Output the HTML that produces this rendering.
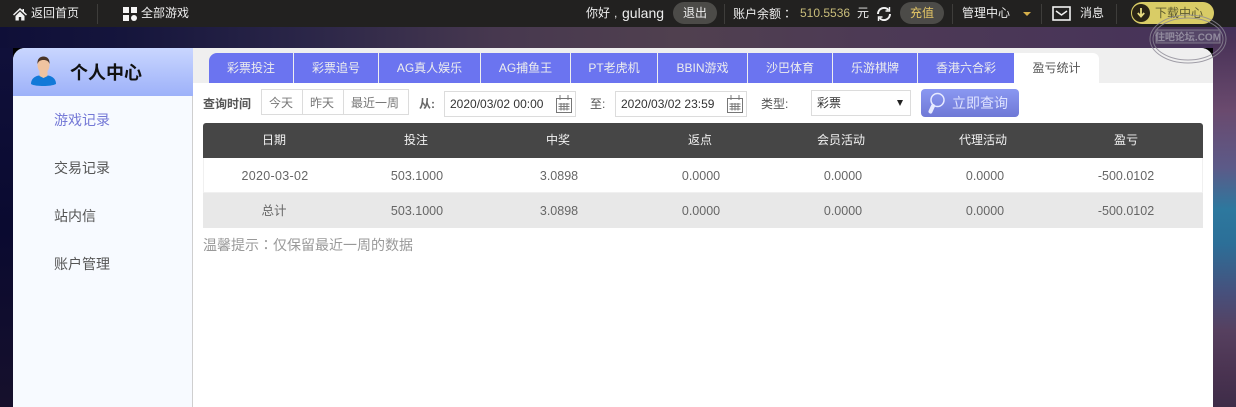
<!DOCTYPE html>
<html><head><meta charset="utf-8"><style>
*{box-sizing:border-box;margin:0;padding:0}
html,body{width:1236px;height:407px;overflow:hidden;background:#000}
body{position:relative;font-family:"Liberation Sans","Noto Sans CJK SC",sans-serif;font-size:13px;color:#555}
.a{position:absolute;white-space:nowrap}
.c{text-align:center}
.tc{font-family:"Noto Sans CJK TC",sans-serif}
#bgr{left:1213px;top:27px;width:23px;height:380px;background:linear-gradient(180deg,#43305a 0,#4a3358 4%,#6a4a6e 22%,#5c5a88 37%,#2d789e 48%,#2c6f98 57%,#47507c 70%,#56405f 80%,#4b3452 90%,#3e2c48 100%)}
#bgt{left:0;top:27px;width:1236px;height:21px;background:linear-gradient(90deg,#0f0f38 0,#15153c 10%,#2b2648 25%,#47384f 40%,#50404f 55%,#4d3a55 70%,#46325a 100%)}
#bgl{left:0;top:48px;width:13px;height:359px;background:linear-gradient(180deg,#10103a,#0a0a30 50%,#16102c)}
#top{left:0;top:0;width:1236px;height:27px;background:#222120}
.t{color:#eee;font-size:12px;line-height:27px;top:0}
.sep{top:4px;width:1px;height:20px;background:#3e3d3b}
.pill{top:2px;height:22px;border-radius:11px;background:#4c4b48;color:#eee;text-align:center;line-height:22px;font-size:12px}
#panel{left:13px;top:48px;width:1200px;height:359px;background:#fff;border-radius:12px 12px 0 0;overflow:hidden}
#strip{left:180px;top:0;width:1020px;height:35px;background:#efefef}
#side{left:0;top:48px;width:180px;height:311px;background:#f7faff;border-right:1px solid #cfcfcf}
#sh{left:0;top:0;width:180px;height:48px;background:linear-gradient(180deg,#c9d6ff,#9db1f9)}
.m{left:41px;font-size:14px;line-height:20px;color:#555}
.tab{top:53px;height:30px;background:#6b74f0;color:#eee;text-align:center;line-height:31px;font-size:12px}
.lab{top:96px;font-size:12px;line-height:16px}
.inp{top:91px;height:26px;border:1px solid #dcdcdc;background:#fff;color:#333;font-size:12px;line-height:24px;padding-left:5px}
.th{top:123px;height:35px;line-height:35px;color:#f2f2f2;font-size:12px;text-align:center;width:142px}
.td{height:35px;line-height:36px;color:#666;font-size:12.5px;text-align:center;width:142px}
</style></head><body>
<div class="a" id="bgt"></div><div class="a" id="bgl"></div><div class="a" id="bgr"></div>
<div class="a" id="top"></div>
<svg class="a" style="left:13px;top:7px" width="14" height="14" viewBox="0 0 14 14"><path d="M7 1L0 7.500l1 1L7 3l6 5.500 1-1L11 4.700V2H9.500v1.300zM2.500 9v4.500h3.300V10h2.400v3.500h3.300V9L7 4.500z" fill="#f2f2f2"/></svg>
<div class="a t" style="left:31px">返回首页</div>
<div class="a sep" style="left:97px"></div>
<svg class="a" style="left:123px;top:7px" width="14" height="14"><rect width="6" height="6" fill="#f5f5f5"/><rect x="8" width="6" height="6" fill="#f5f5f5"/><rect y="8" width="6" height="6" fill="#f5f5f5"/><circle cx="11" cy="11" r="3" fill="#f5f5f5"/></svg>
<div class="a t" style="left:141px">全部游戏</div>
<div class="a t" style="left:586px">你好</div>
<div class="a t" style="left:614px">,</div>
<div class="a t" style="left:622px;font-size:14px">gulang</div>
<div class="a pill" style="left:673px;width:44px">退出</div>
<div class="a sep" style="left:724px"></div>
<div class="a t" style="left:733px">账户余额<span class="tc">：</span></div>
<div class="a t" style="left:800px;color:#c9bd7a">510.5536</div>
<div class="a t" style="left:857px">元</div>
<svg class="a" style="left:876px;top:6px" width="16" height="16" viewBox="0 0 16 16" fill="none" stroke="#f2f2f2" stroke-width="2"><path d="M2 8a6 6 0 0 1 10.500-4M14 8a6 6 0 0 1-10.500 4"/><path d="M13.500 1v4h-4M2.500 15v-4h4" stroke-width="1.400"/></svg>
<div class="a pill" style="left:900px;width:44px;color:#e5c766">充值</div>
<div class="a sep" style="left:952px"></div>
<div class="a t" style="left:962px">管理中心</div>
<div class="a" style="left:1023px;top:12px;border:4px solid transparent;border-top:4px solid #d6b04a"></div>
<div class="a sep" style="left:1041px"></div>
<svg class="a" style="left:1052px;top:6px" width="19" height="15"><rect x="1" y="1" width="17" height="13" fill="none" stroke="#f2f2f2" stroke-width="1.600"/><path d="M4 5l5.500 4L15 5" fill="none" stroke="#f2f2f2" stroke-width="1.500"/></svg>
<div class="a t" style="left:1080px">消息</div>
<div class="a sep" style="left:1116px"></div>
<div class="a" style="left:1131px;top:2px;width:83px;height:22px;border-radius:11px;background:#d9cc66"></div>
<div class="a" style="left:1132px;top:4px;width:18px;height:18px;border-radius:9px;background:#2a2415"></div>
<svg class="a" style="left:1136px;top:8px" width="10" height="10" fill="none" stroke="#e8dc80" stroke-width="1.800"><path d="M5 0v8M1.800 5L5 8.500 8.200 5"/></svg>
<div class="a t" style="left:1155px;color:#5c5a30">下载中心</div>

<div class="a" id="panel">
<div class="a" id="strip"></div>
<div class="a" id="side"></div>
<div class="a" id="sh"></div>
</div>
<svg class="a" style="left:30px;top:56px" width="27" height="30" viewBox="0 0 27 30"><path d="M1 28c0-6 5-9 12.500-9S26 22 26 28c-3 1.500-8 2-12.500 2S3 29.500 1 28z" fill="#1279d8"/><ellipse cx="13.500" cy="9" rx="6" ry="8" fill="#f0c3a0"/><path d="M7.500 8c-.5-5 2.500-7.500 6-7.500s6.500 2.500 6 7.500c-1-3-3-4-6-4s-5 1-6 4z" fill="#4a3528"/><path d="M9.500 15h8v5l-4 2-4-2z" fill="#f0c3a0"/></svg>
<div class="a" style="left:70px;top:61px;font-size:18px;line-height:24px;color:#111;font-weight:bold">个人中心</div>
<div class="a m" style="top:110px;left:54px;color:#7478d6">游戏记录</div>
<div class="a m" style="top:158px;left:54px">交易记录</div>
<div class="a m" style="top:206px;left:54px">站内信</div>
<div class="a m" style="top:254px;left:54px">账户管理</div>

<div class="a tab" style="left:209px;width:84px;border-radius:8px 0 0 0">彩票投注</div>
<div class="a tab" style="left:294px;width:84px">彩票追号</div>
<div class="a tab" style="left:379px;width:101px">AG真人娱乐</div>
<div class="a tab" style="left:481px;width:89px">AG捕鱼王</div>
<div class="a tab" style="left:571px;width:86px">PT老虎机</div>
<div class="a tab" style="left:658px;width:89px">BBIN游戏</div>
<div class="a tab" style="left:748px;width:84px">沙巴体育</div>
<div class="a tab" style="left:833px;width:84px">乐游棋牌</div>
<div class="a tab" style="left:918px;width:96px">香港六合彩</div>
<div class="a tab" style="left:1014px;width:85px;background:#fff;color:#555;border-radius:0 6px 0 0">盈亏统计</div>

<div class="a lab" style="left:203px;color:#555;font-weight:bold">查询时间</div>
<div class="a" style="left:261px;top:89px;width:148px;height:26px;border:1px solid #dcdcdc"></div>
<div class="a" style="left:302px;top:90px;width:1px;height:24px;background:#dcdcdc"></div>
<div class="a" style="left:343px;top:90px;width:1px;height:24px;background:#dcdcdc"></div>
<div class="a lab" style="left:269px;top:95px;color:#777">今天</div>
<div class="a lab" style="left:310px;top:95px;color:#777">昨天</div>
<div class="a lab" style="left:351px;top:95px;color:#777">最近一周</div>
<div class="a lab" style="left:419px;color:#666;font-weight:bold">从:</div>
<div class="a inp" style="left:444px;width:132px">2020/03/02 00:00</div>
<svg class="a" style="left:555px;top:95px" width="18" height="18" fill="none" stroke="#777"><rect x="1.500" y="3.500" width="15" height="14"/><path d="M5 0v5M13 0v5M3.500 9h11M3.500 11.500h11M3.500 14h11M6 8v7.500M9 8v7.500M12 8v7.500"/></svg>
<div class="a lab" style="left:590px;color:#555">至:</div>
<div class="a inp" style="left:615px;width:132px">2020/03/02 23:59</div>
<svg class="a" style="left:726px;top:95px" width="18" height="18" fill="none" stroke="#777"><rect x="1.500" y="3.500" width="15" height="14"/><path d="M5 0v5M13 0v5M3.500 9h11M3.500 11.500h11M3.500 14h11M6 8v7.500M9 8v7.500M12 8v7.500"/></svg>
<div class="a lab" style="left:761px;color:#555">类型:</div>
<div class="a inp" style="left:811px;top:90px;width:100px">彩票</div>
<div class="a" style="left:897px;top:100px;border:3.500px solid transparent;border-top:6px solid #222"></div>
<div class="a" style="left:921px;top:89px;width:98px;height:28px;border-radius:4px;background:linear-gradient(180deg,#8a98f2,#6f78d6);color:#dfe3ff;font-size:14px;line-height:28px;padding-left:31px">立即查询</div>
<svg class="a" style="left:927px;top:92px" width="20" height="23" fill="none" stroke="#e8ebff" stroke-width="1.500"><circle cx="10.500" cy="8" r="6.500"/><path d="M6 14L3.500 19.500" stroke-width="4" stroke-linecap="round"/></svg>

<div class="a" style="left:203px;top:123px;width:1000px;height:35px;background:#464646;border-radius:3px 3px 0 0"></div>
<div class="a" style="left:203px;top:158px;width:1000px;height:35px;background:#fff;border:1px solid #f0f0f0;border-top:0"></div>
<div class="a" style="left:203px;top:193px;width:1000px;height:35px;background:#e8e8e8"></div>

<div class="a th" style="left:203px">日期</div><div class="a th" style="left:345px">投注</div><div class="a th" style="left:487px">中奖</div><div class="a th" style="left:629px">返点</div><div class="a th" style="left:770px">会员活动</div><div class="a th" style="left:912px">代理活动</div><div class="a th" style="left:1055px">盈亏</div>

<div class="a td" style="left:204px;top:158px;letter-spacing:.3px">2020-03-02</div><div class="a td" style="left:346px;top:158px">503.1000</div><div class="a td" style="left:488px;top:158px">3.0898</div><div class="a td" style="left:630px;top:158px">0.0000</div><div class="a td" style="left:772px;top:158px">0.0000</div><div class="a td" style="left:914px;top:158px">0.0000</div><div class="a td" style="left:1055px;top:158px">-500.0102</div>

<div class="a td" style="left:203px;top:193px">总计</div><div class="a td" style="left:346px;top:193px">503.1000</div><div class="a td" style="left:488px;top:193px">3.0898</div><div class="a td" style="left:630px;top:193px">0.0000</div><div class="a td" style="left:772px;top:193px">0.0000</div><div class="a td" style="left:914px;top:193px">0.0000</div><div class="a td" style="left:1055px;top:193px">-500.0102</div>

<div class="a" style="left:203px;top:235px;font-size:14px;line-height:20px;color:#999">温馨提示<span class="tc">：</span>仅保留最近一周的数据</div>

<svg class="a" style="left:1148px;top:12px" width="80" height="54" fill="none" stroke="#8d8a96" stroke-width="1" opacity=".8"><ellipse cx="40" cy="27" rx="38" ry="24"/><ellipse cx="40" cy="27" rx="35" ry="21"/><rect x="8" y="18" width="64" height="13" fill="#6d6580" fill-opacity=".5"/><text x="40" y="28.500" text-anchor="middle" font-size="10" font-weight="bold" font-family="Liberation Sans,Noto Sans CJK SC,sans-serif" fill="#a5a2b0" stroke="none">住吧论坛.COM</text></svg>
</body></html>
